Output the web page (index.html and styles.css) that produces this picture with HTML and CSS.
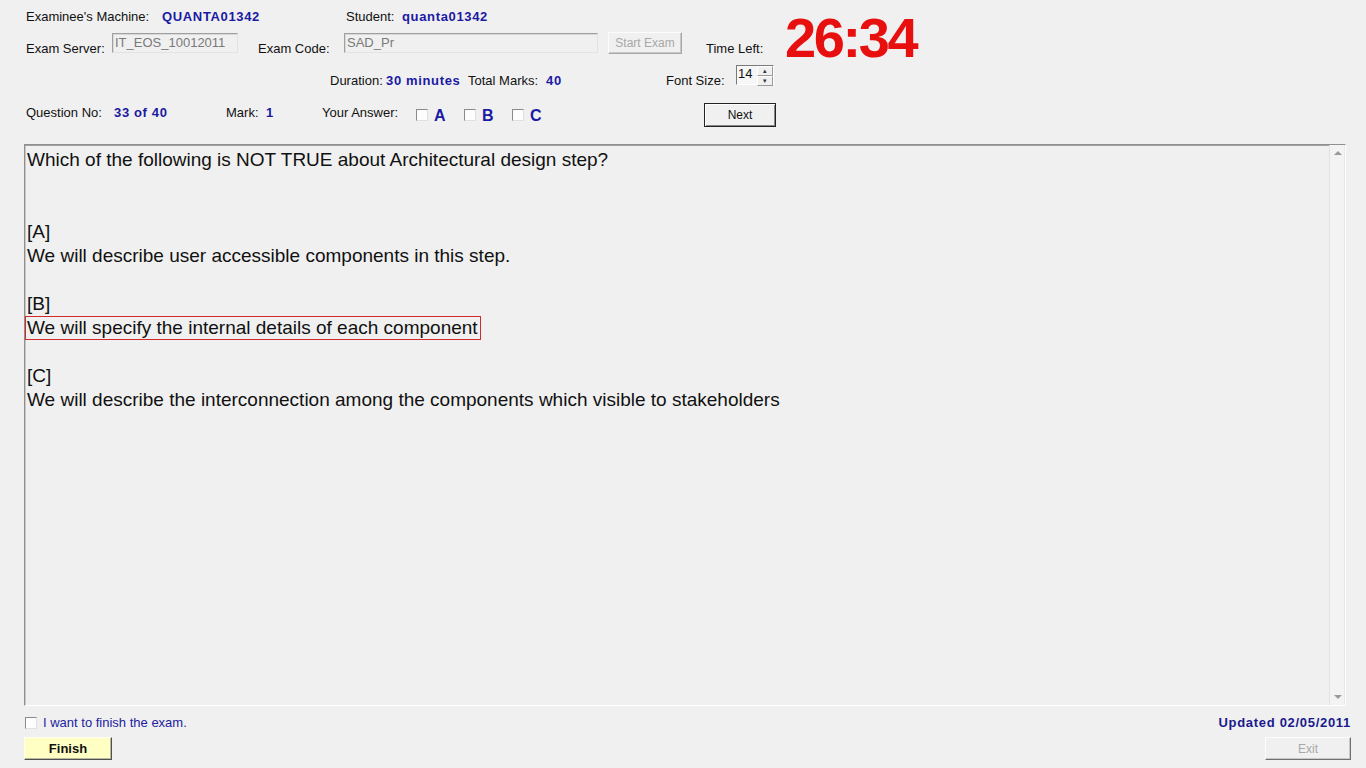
FILE: index.html
```html
<!DOCTYPE html>
<html>
<head>
<meta charset="utf-8">
<title>Exam</title>
<link rel="stylesheet" href="styles.css">
</head>
<body>
<div class="header">
  <div class="row row1">
    <span class="cell w136">Examinee's Machine:</span>
    <span class="cell val w184">QUANTA01342</span>
    <span class="cell w56">Student:</span>
    <span class="cell val">quanta01342</span>
  </div>
  <div class="row row2">
    <span class="cell lbl2 w86">Exam Server:</span>
    <span class="textbox tb-server">IT_EOS_10012011</span>
    <span class="cell lbl2 w86">Exam Code:</span>
    <span class="textbox tb-code">SAD_Pr</span>
    <span class="btn btn-start">Start Exam</span>
    <span class="cell lbl2 w79">Time Left:</span>
    <span class="timer">26:34</span>
  </div>
  <div class="row row3">
    <span class="cell lbl2 w56 ml304">Duration:</span>
    <span class="cell lbl2 val w82">30 minutes</span>
    <span class="cell lbl2 w78">Total Marks:</span>
    <span class="cell lbl2 val w120">40</span>
    <span class="cell lbl2 w70">Font Size:</span>
    <span class="spinner"><span class="spin-val">14</span><span class="spin-btns"><span class="spin-b">&#9652;</span><span class="spin-b">&#9662;</span></span></span>
  </div>
  <div class="row row4">
    <span class="cell lbl4 w88">Question No:</span>
    <span class="cell lbl4 val w112">33 of 40</span>
    <span class="cell lbl4 w40">Mark:</span>
    <span class="cell lbl4 val w56">1</span>
    <span class="cell lbl4 w94">Your Answer:</span>
    <span class="opt w48"><span class="chk"></span><span class="opt-l">A</span></span>
    <span class="opt w48"><span class="chk"></span><span class="opt-l">B</span></span>
    <span class="opt w192"><span class="chk"></span><span class="opt-l">C</span></span>
    <span class="btn btn-next">Next</span>
  </div>
</div>
<div class="qbox">
  <div class="qtext">
    <div class="line">Which of the following is NOT TRUE about Architectural design step?</div>
    <div class="line">&nbsp;</div>
    <div class="line">&nbsp;</div>
    <div class="line">[A]</div>
    <div class="line">We will describe user accessible components in this step.</div>
    <div class="line">&nbsp;</div>
    <div class="line">[B]</div>
    <div class="line"><span class="sel">We will specify the internal details of each component</span></div>
    <div class="line">&nbsp;</div>
    <div class="line">[C]</div>
    <div class="line">We will describe the interconnection among the components which visible to stakeholders</div>
  </div>
  <div class="scrollbar">
    <span class="arrow up"></span>
    <span class="arrow down"></span>
  </div>
</div>
<div class="footer">
  <div class="frow">
    <span class="finish-chk"><span class="chk"></span><span class="finish-lbl">I want to finish the exam.</span></span>
    <span class="updated">Updated 02/05/2011</span>
  </div>
  <div class="frow frow2">
    <span class="btn btn-finish">Finish</span>
    <span class="btn btn-exit">Exit</span>
  </div>
</div>
</body>
</html>
```
FILE: styles.css
```css
html, body {
  margin: 0;
  padding: 0;
  background: #f0f0f0;
}
body {
  font-family: "Liberation Sans", Arial, sans-serif;
  font-size: 13px;
  color: #111;
  width: 1366px;
  height: 768px;
  overflow: hidden;
}
.header {
  padding: 8px 0 0 26px;
}
.row {
  display: flex;
  align-items: flex-start;
}
.cell {
  display: block;
  line-height: 16px;
  white-space: nowrap;
}
.row1 .cell { padding-top: 1px; }
.val {
  color: #1a1aa2;
  font-weight: bold;
  letter-spacing: 0.65px;
}
.w40 { width: 40px; }
.w48 { width: 48px; }
.w56 { width: 56px; }
.w70 { width: 70px; }
.w78 { width: 78px; }
.w79 { width: 79px; }
.w82 { width: 82px; }
.w86 { width: 86px; }
.w88 { width: 88px; }
.w94 { width: 94px; }
.w112 { width: 112px; }
.w120 { width: 120px; }
.w136 { width: 136px; }
.w184 { width: 184px; }
.w192 { width: 192px; }
.ml304 { margin-left: 304px; }

.row1 { height: 16px; }
.row2 { margin-top: 8px; height: 24px; }
.row3 { margin-top: 8px; height: 24px; }
.row4 { margin-top: 14px; height: 24px; }

.lbl2 { padding-top: 9px; }
.lbl4 { padding-top: 3px; }

.textbox {
  display: block;
  box-sizing: border-box;
  height: 20px;
  margin-top: 1px;
  padding: 1px 0 0 2px;
  line-height: 16px;
  color: #7a7a7a;
  background: #f0f0f0;
  border-top: 1px solid #a0a0a0;
  border-left: 1px solid #a0a0a0;
  border-right: 1px solid #e3e3e3;
  border-bottom: 1px solid #e3e3e3;
  box-shadow: inset 1px 1px 0 #d8d8d8;
}
.tb-server { width: 126px; margin-right: 20px; }
.tb-code { width: 254px; margin-right: 10px; }

.btn {
  display: flex;
  align-items: center;
  justify-content: center;
  box-sizing: border-box;
  font-size: 12px;
  border-top: 1px solid #fcfcfc;
  border-left: 1px solid #fcfcfc;
  border-right: 1px solid #8a8a8a;
  border-bottom: 1px solid #8a8a8a;
  box-shadow: inset -1px -1px 0 #c8c8c8;
  background: #f0f0f0;
}
.btn-start {
  width: 74px;
  height: 22px;
  color: #a8a8a8;
  margin-right: 24px;
  border-right-color: #a8a8a8;
  border-bottom-color: #a8a8a8;
}
.btn-next {
  width: 72px;
  height: 24px;
  margin-top: 1px;
  color: #111;
  border: 1px solid #222;
  box-shadow: inset 1px 1px 0 #fff, inset -1px -1px 0 #888;
}
.timer {
  display: block;
  font-size: 56px;
  font-weight: bold;
  color: #e8100f;
  letter-spacing: -2.4px;
  line-height: 56px;
  margin-top: -22px;
}

.spinner {
  display: flex;
  box-sizing: border-box;
  width: 38px;
  height: 20px;
  margin-top: 1px;
  background: #f6f6f6;
  border-top: 1px solid #7a7a7a;
  border-left: 1px solid #7a7a7a;
  border-right: 1px solid #fff;
  border-bottom: 1px solid #fff;
}
.spin-val {
  flex: 1;
  line-height: 15px;
  padding-left: 1px;
  font-size: 13px;
}
.spin-btns {
  display: flex;
  flex-direction: column;
  width: 16px;
}
.spin-b {
  flex: 1;
  display: flex;
  align-items: center;
  justify-content: center;
  font-size: 7px;
  line-height: 8px;
  color: #333;
  background: #f0f0f0;
  border-top: 1px solid #fff;
  border-left: 1px solid #fff;
  border-right: 1px solid #9a9a9a;
  border-bottom: 1px solid #9a9a9a;
  box-sizing: border-box;
}

.opt {
  display: flex;
  align-items: center;
  height: 26px;
}
.chk {
  display: block;
  box-sizing: border-box;
  width: 12px;
  height: 12px;
  background: #fdfdfd;
  border-top: 1px solid #8a8a8a;
  border-left: 1px solid #8a8a8a;
  border-right: 1px solid #e0e0e0;
  border-bottom: 1px solid #e0e0e0;
}
.opt-l {
  margin-left: 6px;
  font-size: 16px;
  font-weight: bold;
  color: #1a1aa2;
  line-height: 18px;
  padding-top: 2px;
}

.qbox {
  display: flex;
  box-sizing: border-box;
  margin: 18px 0 0 24px;
  width: 1322px;
  height: 562px;
  border-top: 1px solid #8f8f8f;
  border-left: 1px solid #8f8f8f;
  border-right: 1px solid #ffffff;
  border-bottom: 1px solid #ffffff;
  box-shadow: inset 0 1px 0 #9f9f9f, inset 1px 0 0 #c8c8c8;
}
.qtext {
  flex: 1;
  padding: 3px 0 0 2px;
  font-size: 19px;
  line-height: 24px;
  color: #111;
}
.line {
  height: 24px;
  white-space: nowrap;
}
.sel {
  display: inline-block;
  box-sizing: border-box;
  height: 24px;
  line-height: 22px;
  margin-left: -2px;
  padding: 0 2px 0 1px;
  border: 1px solid #d12a2a;
}
.scrollbar {
  position: relative;
  width: 15px;
  border-left: 1px solid #e2e2e2;
  background: #f3f3f3;
  box-shadow: inset -1px 0 0 #e8e8e8;
}
.arrow {
  position: absolute;
  left: 4px;
  width: 0;
  height: 0;
  border-left: 4px solid transparent;
  border-right: 4px solid transparent;
}
.arrow.up {
  top: 6px;
  border-bottom: 4px solid #9a9a9a;
}
.arrow.down {
  bottom: 6px;
  border-top: 4px solid #9a9a9a;
}

.footer {
  padding: 0 15px 0 24px;
}
.frow {
  display: flex;
  justify-content: space-between;
  align-items: center;
  height: 16px;
  margin-top: 9px;
}
.finish-chk {
  display: flex;
  align-items: center;
  padding-left: 1px;
}
.finish-lbl {
  margin-left: 6px;
  color: #2222a0;
  font-size: 13px;
  line-height: 16px;
}
.updated {
  color: #1a1a8e;
  font-weight: bold;
  font-size: 13px;
  line-height: 16px;
  letter-spacing: 0.7px;
}
.frow2 {
  height: 22px;
  margin-top: 6px;
  align-items: flex-start;
}
.btn-finish {
  width: 88px;
  height: 23px;
  background: #ffffc4;
  font-weight: bold;
  font-size: 13px;
  color: #111;
  border-top: 1px solid #fffff0;
  border-left: 1px solid #fffff0;
  border-right: 1px solid #505050;
  border-bottom: 1px solid #505050;
  box-shadow: inset -1px -1px 0 #b8b8a0;
}
.btn-exit {
  width: 86px;
  height: 23px;
  color: #a8a8a8;
  font-size: 12px;
  border-right-color: #707070;
  border-bottom-color: #707070;
}
```
